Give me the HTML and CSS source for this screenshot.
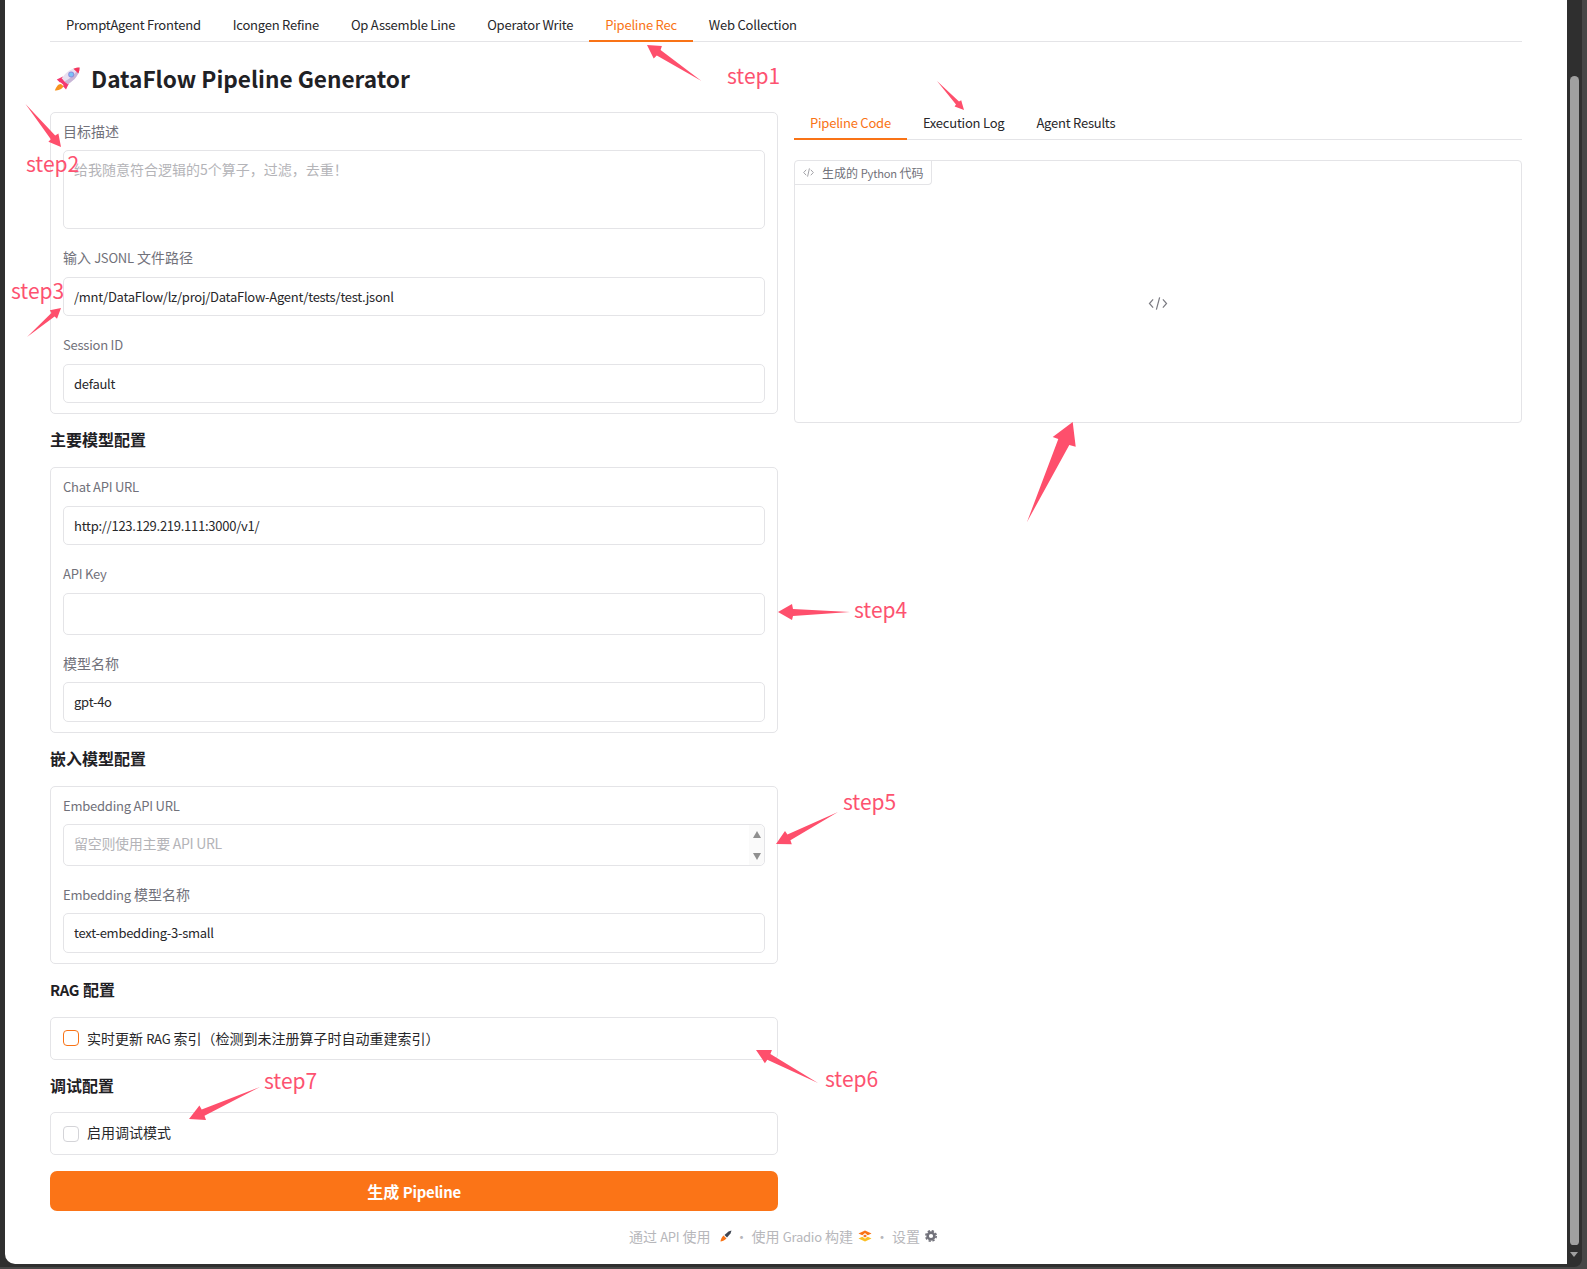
FILE: index.html
```html
<!DOCTYPE html>
<html lang="zh">
<head>
<meta charset="utf-8">
<title>DataFlow Pipeline Generator</title>
<link rel="stylesheet" href="styles.css">
</head>
<body>
<div class="window">
  <main class="page">
    <nav class="tabs top-tabs">
      <a class="tab en">PromptAgent Frontend</a>
      <a class="tab en">Icongen Refine</a>
      <a class="tab en">Op Assemble Line</a>
      <a class="tab en">Operator Write</a>
      <a class="tab en active">Pipeline Rec</a>
      <a class="tab en">Web Collection</a>
    </nav>
    <h1 class="title">
      <svg class="rocket" viewBox="0 0 27 25" aria-hidden="true">
        <path d="M7 18C3.5 18 2 21.5 .8 24.6 4.2 24.4 8 23.4 9.6 20.2Z" fill="#f7931e"/>
        <path d="M9 10.5 2.8 13.6 6 16.4 9.5 15.4Z" fill="#f4386f"/>
        <path d="M15.4 16.6 12 23.4 9 20.2 10.6 17Z" fill="#f4386f"/>
        <path d="M25.6 1.4C19.5 1.4 12 5 7.6 12.6L13.4 18.2C21 14 25.6 8 25.6 1.4Z" fill="#e9e0f0"/>
        <path d="M25.6 1.4C25.6 8 21 14 13.4 18.2L10.6 15.5C17 12 22 7 25.6 1.4Z" fill="#c8b6d6"/>
        <path d="M25.6 1.4C23.4 1.4 21.3 1.9 19.4 2.7L24.4 7.4C25.2 5.5 25.6 3.5 25.6 1.4Z" fill="#f5365c"/>
        <circle cx="17.2" cy="8.6" r="3" fill="#8c8fe0"/>
        <circle cx="17.2" cy="8.6" r="2" fill="#7cc4f6"/>
        <path d="M7.4 12.6 13.4 18.2 10.6 20 5.8 15.4Z" fill="#f4386f"/>
      </svg>
      <span>DataFlow Pipeline Generator</span>
    </h1>
    <div class="columns">
      <section class="left">
        <div class="panel">
          <div class="field">
            <label class="label">目标描述</label>
            <textarea class="control textarea" placeholder="给我随意符合逻辑的5个算子，过滤，去重！"></textarea>
          </div>
          <div class="field">
            <label class="label lift">输入 <span class="en">JSONL</span> 文件路径</label>
            <input class="control en-input" value="/mnt/DataFlow/lz/proj/DataFlow-Agent/tests/test.jsonl">
          </div>
          <div class="field">
            <label class="label lift"><span class="en">Session ID</span></label>
            <input class="control en-input" value="default">
          </div>
        </div>
        <h2 class="section">主要模型配置</h2>
        <div class="panel">
          <div class="field">
            <label class="label"><span class="en">Chat API URL</span></label>
            <input class="control en-input chat" value="http://123.129.219.111:3000/v1/">
          </div>
          <div class="field snug">
            <label class="label"><span class="en">API Key</span></label>
            <input class="control tall" type="text">
          </div>
          <div class="field snug">
            <label class="label">模型名称</label>
            <input class="control raised en-input" value="gpt-4o">
          </div>
        </div>
        <h2 class="section">嵌入模型配置</h2>
        <div class="panel">
          <div class="field">
            <label class="label"><span class="en">Embedding API URL</span></label>
            <div class="control spin-box">
              <input class="bare" placeholder="留空则使用主要 API URL">
              <span class="spinner"><i class="up"></i><i class="down"></i></span>
            </div>
          </div>
          <div class="field tight">
            <label class="label"><span class="en">Embedding</span> 模型名称</label>
            <input class="control plain en-input" value="text-embedding-3-small">
          </div>
        </div>
        <h2 class="section closer"><span class="en">RAG</span> 配置</h2>
        <div class="panel check-panel">
          <label class="check"><input type="checkbox" class="box box-on"><span>实时更新 <span class="en">RAG</span> 索引（检测到未注册算子时自动重建索引）</span></label>
        </div>
        <h2 class="section shorter">调试配置</h2>
        <div class="panel check-panel roomy">
          <label class="check"><input type="checkbox" class="box"><span>启用调试模式</span></label>
        </div>
        <button class="primary">生成 <span class="en">Pipeline</span></button>
      </section>
      <section class="right">
        <nav class="tabs sub-tabs">
          <a class="tab en active">Pipeline Code</a>
          <a class="tab en">Execution Log</a>
          <a class="tab en">Agent Results</a>
        </nav>
        <div class="code-box">
          <div class="code-label">
            <svg class="code-small" viewBox="0 0 24 24" aria-hidden="true"><path d="M7 6 1.5 12 7 18M17 6l5.500 6L17 18M14 3l-4 18"/></svg>
            <span>生成的 <span class="en">Python</span> 代码</span>
          </div>
          <div class="code-empty">
            <svg class="code-big" viewBox="0 0 24 16" aria-hidden="true"><path d="M6 3 1.500 8 6 13M18 3l4.500 5L18 13M14 .5 10 15.500"/></svg>
          </div>
        </div>
      </section>
    </div>
    <footer class="footer">
      <span>通过 <span class="en">API</span> 使用</span>
      <svg class="f-rocket" viewBox="0 0 12 12" aria-hidden="true"><path d="M3.500 5.500C1.500 7.500.5 10 .5 11.500 2 11.500 4.500 10.500 6.500 8.500Z" fill="#f97316"/><path d="M4.500 5 8.500 1.500 11.500.5 10.500 3.500 7 7.500Z" fill="#3f4653"/></svg>
      <span class="dot">·</span>
      <span>使用 <span class="en">Gradio</span> 构建</span>
      <svg class="f-logo" viewBox="0 0 14 12" aria-hidden="true"><path d="M7 .5 13.500 3.500 7 6.500.5 3.500Z" fill="#f97316"/><path d="M7 5.500 13.500 8.500 7 11.500.5 8.500Z" fill="#fbbf24"/><path d="M7 3 10.500 6 7 8.800 3.500 6Z" fill="#fff"/><path d="M7 4.500 9 6 7 7.400 5 6Z" fill="#f97316"/></svg>
      <span class="dot">·</span>
      <span>设置</span>
      <svg class="f-gear" viewBox="0 0 12 12" aria-hidden="true"><circle cx="6" cy="6" r="3.400" fill="none" stroke="#71717a" stroke-width="2.600"/><circle cx="6" cy="6" r="5.200" fill="none" stroke="#71717a" stroke-width="1.600" stroke-dasharray="2.300 1.800"/></svg>
    </footer>
  </main>
  <aside class="scrollbar">
    <span class="thumb"></span><i class="arrow"></i>
  </aside>
</div>

<svg class="arrows" viewBox="0 0 1587 1269" aria-hidden="true">
  <polygon points="701.5,81 656.8,55.5 653.7,58.5 647,45 661.9,45.900 660.6,49.9"/>
  <polygon points="937,81 959,101.6 961.2,100.3 964,110 954.6,106.5 956,104.4"/>
  <polygon points="25.5,104 55.2,135.6 58.4,133.6 61,147 48.4,141.8 50.8,139.2"/>
  <polygon points="27,337 54.6,316.6 57,318.7 61,308 49.8,310.3 51.4,313"/>
  <polygon points="1027,522 1069.3,445 1075.7,446.7 1072.7,422 1052.7,437 1058.3,439"/>
  <polygon points="850,612 793,616 792,620 778,612 792,604 793,609"/>
  <polygon points="838,812 790.4,840.3 791.8,844.3 776,844 785,830.9 787.4,834.5"/>
  <polygon points="818,1083 767.3,1059.7 764.9,1063.2 756,1050 771.9,1050 770.4,1053.9"/>
  <polygon points="260,1087 204.5,1115.8 206,1120.1 189,1119 199.4,1105.5 201.7,1109.4"/>
</svg>
<span class="step s1">step1</span>
<span class="step s2">step2</span>
<span class="step s3">step3</span>
<span class="step s4">step4</span>
<span class="step s5">step5</span>
<span class="step s6">step6</span>
<span class="step s7">step7</span>
</body>
</html>
```
FILE: styles.css
```css
* { box-sizing: border-box; }
html, body { margin: 0; height: 100%; }
body {
  position: relative;
  width: 1587px;
  height: 1269px;
  overflow: hidden;
  background: #474747;
  font-family: "Noto Sans CJK SC", sans-serif;
  font-size: 14px;
  color: #27272a;
}
.en {
  font-size: 0.93em;
  letter-spacing: -0.018em;
}
.window {
  display: flex;
  width: 1582px;
  height: 1267px;
  padding-left: 5px;
  background: #2f2f2f;
  border-bottom-right-radius: 8px;
}
.page {
  width: 1562px;
  height: 1264px;
  padding: 0 45px;
  background: #fff;
  border-bottom-left-radius: 10px;
}
.tabs {
  display: flex;
  border-bottom: 1px solid #e4e4e7;
}
.tab {
  display: block;
  padding: 0 16px;
  margin-bottom: -1px;
  border-bottom: 2px solid transparent;
  color: #27272a;
  white-space: nowrap;
}
.tab.active {
  color: #f97316;
  border-bottom-color: #f97316;
}
.top-tabs { height: 42px; padding-top: 15px; line-height: 19px; }
.top-tabs .tab { height: 27px; }
.title {
  display: flex;
  align-items: center;
  gap: 10px;
  height: 70px;
  margin: 0;
  padding: 3px 0 0 4px;
  font-size: 22.6px;
  font-weight: 600;
  line-height: 32px;
  color: #1f2125;
}
.rocket { width: 27px; height: 25px; flex: none; }
.columns {
  display: grid;
  grid-template-columns: 728px 728px;
  gap: 16px;
}
.panel {
  padding: 9px 12px 10px;
  border: 1px solid #e4e4e7;
  border-radius: 5px;
  background: #fff;
}
.field + .field { margin-top: 20px; }
.field.snug { margin-top: 19.5px; }
.field.tight { margin-top: 18.5px; }
.label {
  display: block;
  height: 20px;
  margin-bottom: 8.5px;
  line-height: 19px;
  color: #71717a;
}
.label.lift { line-height: 17px; }
.control {
  display: block;
  width: 100%;
  height: 38.5px;
  padding: 0 10px;
  border: 1px solid #e4e4e7;
  border-radius: 5px;
  background: #fff;
  font: inherit;
  color: #27272a;
  outline: none;
}
.en-input.control {
  font-size: 13px;
  letter-spacing: -0.26px;
}
.chat { height: 39px; padding-top: 1px; }
.tall { height: 42px; }
.raised { height: 40px; margin-top: -1px; }
.plain { height: 40px; padding-bottom: 1px; }
.textarea {
  height: 79px;
  margin-top: -1px;
  padding: 8px 10px;
  line-height: 21px;
  resize: none;
}
::placeholder { color: #b4b4b8; opacity: 1; }
.spin-box {
  display: flex;
  align-items: center;
  height: 42.5px;
  margin-top: -1px;
  padding-right: 0;
}
.bare {
  flex: 1;
  min-width: 0;
  border: 0;
  padding: 0 0 3px;
  font: inherit;
  letter-spacing: -0.3px;
  background: transparent;
  outline: none;
}
.spinner {
  display: flex;
  flex-direction: column;
  justify-content: space-between;
  align-items: center;
  align-self: stretch;
  width: 15px;
  padding: 6px 0 5px;
  background: #fafafa;
  border-radius: 0 5px 5px 0;
}
.up, .down {
  width: 0;
  height: 0;
  border-left: 4px solid transparent;
  border-right: 4px solid transparent;
}
.up { border-bottom: 7px solid #8f8f8f; }
.down { border-top: 7px solid #8f8f8f; }
.section {
  height: 26px;
  margin: 13.5px 0 14px;
  font-size: 16px;
  font-weight: 600;
  line-height: 25px;
  color: #1f2125;
}
.section.closer { margin-top: 12.5px; }
.section.shorter { margin-bottom: 13px; }
.check-panel { padding: 12.5px 12px; }
.roomy .check span { margin-bottom: 3px; }
.check {
  display: flex;
  align-items: center;
  gap: 8px;
  height: 16px;
  line-height: 16px;
}
.box {
  appearance: none;
  width: 16px;
  height: 16px;
  margin: 0;
  border: 1px solid #d4d4d8;
  border-radius: 4px;
  background: #fff;
  flex: none;
}
.box-on { border-color: #f97316; }
.primary {
  display: block;
  width: 100%;
  height: 40px;
  margin-top: 16px;
  border: 0;
  border-radius: 7px;
  background: #fb7417;
  color: #fff;
  font: inherit;
  font-size: 16px;
  font-weight: 600;
}
.sub-tabs { height: 28px; line-height: 21.5px; }
.sub-tabs .tab { height: 28px; }
.code-box {
  display: flex;
  flex-direction: column;
  height: 263px;
  margin-top: 20px;
  border: 1px solid #e4e4e7;
  border-radius: 4px;
}
.code-label {
  display: flex;
  align-items: center;
  gap: 8px;
  align-self: flex-start;
  height: 24px;
  padding: 0 7px 1px 8px;
  border-right: 1px solid #e4e4e7;
  border-bottom: 1px solid #e4e4e7;
  border-radius: 0 0 4px 0;
  font-size: 12px;
  color: #71717a;
}
.code-small { width: 11px; height: 11px; fill: none; stroke: #9a9aa0; stroke-width: 2; }
.code-empty {
  flex: 1;
  display: flex;
  align-items: center;
  justify-content: center;
}
.code-big { width: 20px; height: 13px; fill: none; stroke: #7b7b82; stroke-width: 1.500; }
.footer {
  display: flex;
  align-items: center;
  justify-content: center;
  height: 20px;
  margin-top: 15px;
  padding-right: 6px;
  color: #b7b7bb;
}
.dot { margin: 0 3px; }
.f-rocket { width: 12px; height: 12px; margin-left: 9px; }
.f-logo { width: 14px; height: 12px; margin-left: 5px; }
.f-gear { width: 12px; height: 12px; margin-left: 5px; }
.scrollbar {
  width: 15px;
  padding: 76px 3px 0;
}
.thumb {
  display: block;
  width: 9px;
  height: 1169px;
  border-radius: 5px 5px 4px 4px;
  background: #a0a0a0;
}
.arrow {
  display: block;
  width: 0;
  height: 0;
  margin: 7px 0 0 0;
  border-left: 4.500px solid transparent;
  border-right: 4.500px solid transparent;
  border-top: 5px solid #a0a0a0;
}
.arrows {
  position: absolute;
  left: 0;
  top: 0;
  width: 1587px;
  height: 1269px;
  pointer-events: none;
  fill: #fe4f6c;
}
.step {
  position: absolute;
  font-size: 21px;
  line-height: 26px;
  color: #fd5270;
}
.s1 { left: 727px; top: 62px; }
.s2 { left: 26px; top: 150px; }
.s3 { left: 11px; top: 277px; }
.s4 { left: 854px; top: 596px; }
.s5 { left: 843px; top: 788px; }
.s6 { left: 825px; top: 1065px; }
.s7 { left: 264px; top: 1067px; }
```
